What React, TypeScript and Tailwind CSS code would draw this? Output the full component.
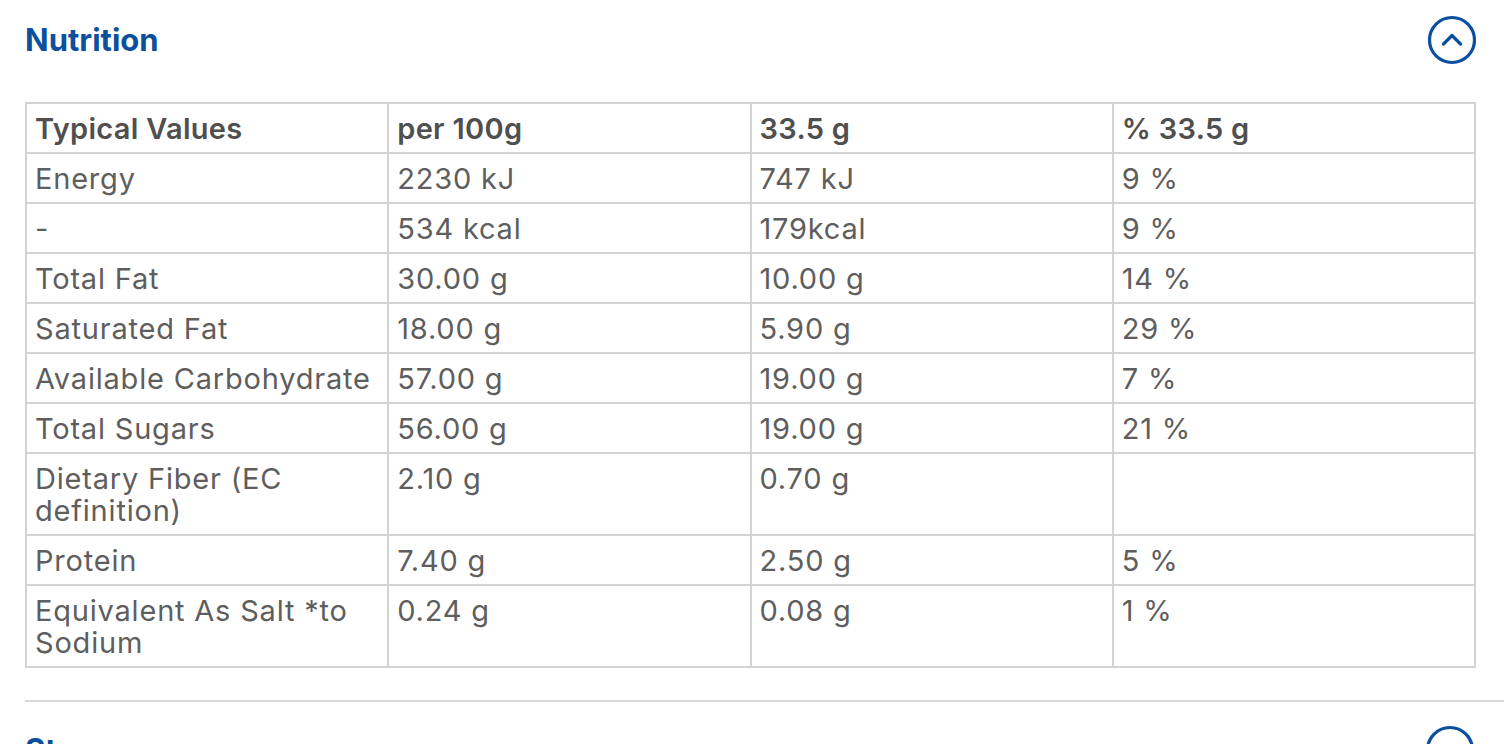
import { useState } from 'react'

const rows: string[][] = [
  ['Energy', '2230 kJ', '747 kJ', '9 %'],
  ['-', '534 kcal', '179kcal', '9 %'],
  ['Total Fat', '30.00 g', '10.00 g', '14 %'],
  ['Saturated Fat', '18.00 g', '5.90 g', '29 %'],
  ['Available Carbohydrate', '57.00 g', '19.00 g', '7 %'],
  ['Total Sugars', '56.00 g', '19.00 g', '21 %'],
  ['Dietary Fiber (EC definition)', '2.10 g', '0.70 g', ''],
  ['Protein', '7.40 g', '2.50 g', '5 %'],
  ['Equivalent As Salt *to Sodium', '0.24 g', '0.08 g', '1 %'],
]

function CircleChevron({ up }: { up: boolean }) {
  return (
    <svg width="52" height="52" viewBox="0 0 52 52" fill="none" stroke="#0b4f9e" strokeWidth="3.2" strokeLinecap="round" strokeLinejoin="round">
      <circle cx="26" cy="26" r="22.5" />
      {up ? <polyline points="17.5,30 26,21.5 34.5,30" /> : <polyline points="17.5,22 26,30.5 34.5,22" />}
    </svg>
  )
}

export default function App() {
  const [open, setOpen] = useState(true)

  return (
    <div className="h-[744px] overflow-hidden bg-white font-['Inter','Noto_Sans',sans-serif]">
      {/* Nutrition */}
      <section className="pl-[25px] pr-[28px]">
        <div className="flex items-center justify-between h-[80px]">
          <h2 className="text-[31px] font-bold text-[#0b4f9e]">Nutrition</h2>
          <button onClick={() => setOpen(!open)} className="-mr-[2px]">
            <CircleChevron up={open} />
          </button>
        </div>
        {open && (
          <table className="mt-[22px] w-[1451px] table-fixed border-collapse text-[29px] leading-[32px] tracking-[0.8px] text-[#5e5e5e]">
            <thead>
              <tr>
                {['Typical Values', 'per 100g', '33.5 g', '% 33.5 g'].map((h) => (
                  <th key={h} className="border-2 border-[#d3d3d3] px-[8px] pt-[9px] pb-[7px] text-left align-top font-semibold tracking-[0.3px] text-[#4f4f4f]">
                    {h}
                  </th>
                ))}
              </tr>
            </thead>
            <tbody>
              {rows.map((r, i) => (
                <tr key={i}>
                  {r.map((c, j) => (
                    <td key={j} className="border-2 border-[#d3d3d3] px-[8px] pt-[9px] pb-[7px] align-top">
                      {c}
                    </td>
                  ))}
                </tr>
              ))}
            </tbody>
          </table>
        )}
      </section>

      {/* Storage */}
      <section className="mt-[32px] pl-[25px]">
        <div className="border-t-2 border-[#d8d8d8]" />
        <div className="flex items-center justify-between h-[80px] mt-[8px] pr-[28px]">
          <h2 className="text-[31px] font-bold text-[#0b4f9e]">Storage</h2>
          <CircleChevron up={false} />
        </div>
      </section>
    </div>
  )
}
